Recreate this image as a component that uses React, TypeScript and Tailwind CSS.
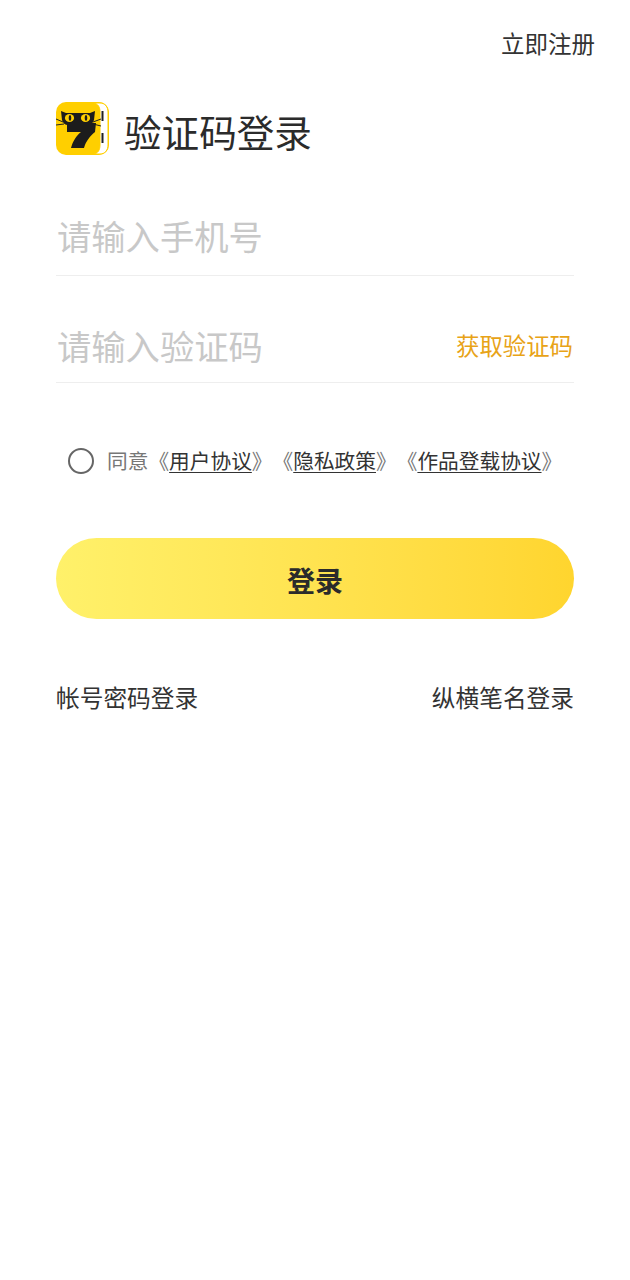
const font = "font-['Noto_Sans_CJK_SC',sans-serif]";

function Logo() {
  return (
    <svg width="54" height="54" viewBox="0 0 54 54" className="shrink-0">
      <rect x="0" y="0" width="53" height="53" rx="10" fill="#FFCF00" />
      <path d="M38 1h6c5 0 8 4 8 9v33c0 5-3 9-8 9h-6c4-1 6-4 6-9V10c0-5-2-8-6-9z" fill="#fff" stroke="#FFCF00" strokeWidth="1" />
      <path d="M45.5 9h2v10h-2zM45.5 31h2v10h-2z" fill="#222" />
      <path d="M0 17l7 3M0 23l8-1M37 20l8-3M37 22l8 2" stroke="#222" strokeWidth="1" fill="none" />
      <path d="M5 9l5 2h24l5-2-1 9c-1 3-3 5-6 5H12c-3 0-5-2-6-5z" fill="#1c1c1c" />
      <ellipse cx="13.5" cy="16" rx="4.6" ry="4" fill="#FFCF00" />
      <ellipse cx="29.5" cy="16" rx="4.6" ry="4" fill="#FFCF00" />
      <ellipse cx="14" cy="16" rx="1.3" ry="3" fill="#1c1c1c" />
      <ellipse cx="30" cy="16" rx="1.3" ry="3" fill="#1c1c1c" />
      <path d="M11 21h29l-1 9c-5 4-9 9-11 16H15c2-7 5-12 10-16H11z" fill="#1c1c1c" />
    </svg>
  );
}

export default function App() {
  return (
    <div className={`w-[630px] h-[1280px] bg-white flex flex-col ${font}`}>
      <div className="flex justify-end pt-[28px] pr-[35px] text-[23.5px] leading-[30px] text-[#333]">立即注册</div>
      <div className="flex items-center gap-[14px] pl-[56px] pt-[39px]">
        <Logo />
        <span className="text-[37.6px] leading-[60px] pt-[4px] text-[#2b2b2b]">验证码登录</span>
      </div>
      <div className="mx-[56px] mt-[36px] h-[79px] pl-[1px] border-b border-[#eee] flex items-center text-[34.3px] text-[#c8c8c8]">请输入手机号</div>
      <div className="mx-[56px] mt-[33px] h-[74px] pl-[1px] border-b border-[#eee] flex items-center justify-between text-[34.3px] text-[#c8c8c8]">
        <span>请输入验证码</span>
        <span className="text-[23.4px] text-[#E8A317] pr-[1px]">获取验证码</span>
      </div>
      <div className="flex items-center pl-[68px] mt-[62px] text-[20.7px] text-[#777] [text-spacing-trim:space-all]">
        <span className="w-[26px] h-[26px] rounded-full border-2 border-[#666] mr-[13px]" />
        <span>同意《</span><span className="underline decoration-1 underline-offset-[3px] text-[#333]">用户协议</span><span>》《</span><span className="underline decoration-1 underline-offset-[3px] text-[#333]">隐私政策</span><span>》《</span><span className="underline decoration-1 underline-offset-[3px] text-[#333]">作品登载协议</span><span>》</span>
      </div>
      <div className="mx-[56px] mt-[62px] h-[81px] pt-[2px] rounded-full bg-gradient-to-r from-[#FFF16A] to-[#FFD52E] flex items-center justify-center text-[28px] font-bold text-[#2b2b2b]">登录</div>
      <div className="mx-[56px] mt-[61px] flex justify-between text-[23.7px] text-[#333]">
        <span>帐号密码登录</span>
        <span>纵横笔名登录</span>
      </div>
    </div>
  );
}
